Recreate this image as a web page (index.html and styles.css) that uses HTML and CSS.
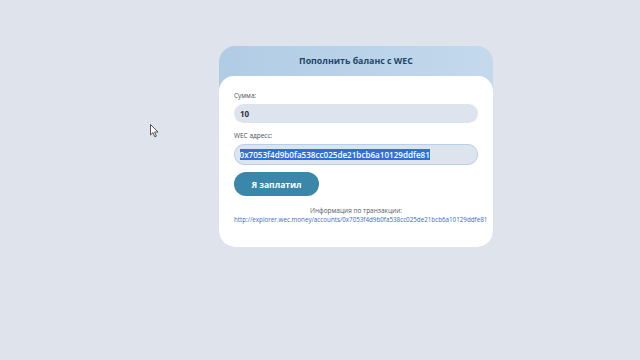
FILE: index.html
```html
<!DOCTYPE html>
<html lang="ru">
<head>
<meta charset="utf-8">
<title>Пополнить баланс с WEC</title>
<link rel="stylesheet" href="styles.css">
</head>
<body>
<div class="page">
  <div class="card">
    <div class="card-head">Пополнить баланс с WEC</div>
    <div class="card-body">
      <div class="field">
        <div class="label">Сумма:</div>
        <div class="input">10</div>
      </div>
      <div class="field">
        <div class="label">WEC адресс:</div>
        <div class="input focus"><span class="sel">0x7053f4d9b0fa538cc025de21bcb6a10129ddfe81</span></div>
      </div>
      <div class="btn">Я заплатил</div>
      <div class="info">
        <div class="info-title">Информация по транзакции:</div>
        <a class="info-link" href="#">http://explorer.wec.money/accounts/0x7053f4d9b0fa538cc025de21bcb6a10129ddfe81</a>
      </div>
    </div>
  </div>
</div>
<svg class="cursor" width="9" height="14" viewBox="0 0 9 14"><path d="M0.5 0.5 L0.5 11 L3 8.6 L4.8 12.8 L6.4 12.1 L4.6 8 L8 8 Z" fill="#fff" stroke="#444" stroke-width="0.9" stroke-linejoin="round"/></svg>
</body>
</html>
```
FILE: styles.css
```css
html, body {
  margin: 0;
  padding: 0;
}
body {
  width: 640px;
  height: 360px;
  background: #dfe4ec;
  font-family: "Open Sans", "Noto Sans", sans-serif;
  position: relative;
  overflow: hidden;
}
.page {
  padding-top: 46px;
  padding-left: 219px;
}
.card {
  width: 274px;
  border-radius: 16px;
  background: linear-gradient(90deg, #b0cce4 0%, #bcd4ea 60%, #c4d9ec 100%);
  overflow: hidden;
}
.card-head {
  height: 30px;
  display: flex;
  align-items: center;
  justify-content: center;
  font-weight: 700;
  font-size: 8.8px;
  color: #234766;
}
.card-body {
  background: #fff;
  border-radius: 15px;
  padding: 15px 15px 20px;
  height: 136px;
}
.field {
  margin-bottom: 8px;
}
.label {
  font-size: 6.5px;
  color: #4a5058;
  margin-bottom: 4px;
  line-height: 9px;
}
.input {
  height: 19px;
  border-radius: 10px;
  background: #dde4ee;
  display: flex;
  align-items: center;
  padding-left: 6px;
  font-size: 8px;
  font-weight: 700;
  color: #2c3440;
  box-sizing: border-box;
}
.input.focus {
  height: 21px;
  border: 1.5px solid #b8cfe9;
  padding-left: 4.5px;
  font-weight: 600;
  font-size: 8.1px;
}
.sel {
  background: #2f6fd8;
  color: #fff;
  line-height: 11px;
}
.btn {
  width: 85px;
  height: 24px;
  border-radius: 12px;
  background: #3a87a9;
  color: #fff;
  font-weight: 700;
  font-size: 8.5px;
  display: flex;
  align-items: center;
  justify-content: center;
  margin-top: -1px;
}
.info {
  margin-top: 10px;
  text-align: center;
  white-space: nowrap;
}
.info-title {
  font-size: 6.5px;
  color: #555b63;
  line-height: 9px;
}
.info-link {
  display: block;
  text-align: left;
  font-size: 6.25px;
  color: #3a6cbc;
  text-decoration: none;
  line-height: 9px;
}
.cursor {
  position: absolute;
  left: 150px;
  top: 124px;
}
```
